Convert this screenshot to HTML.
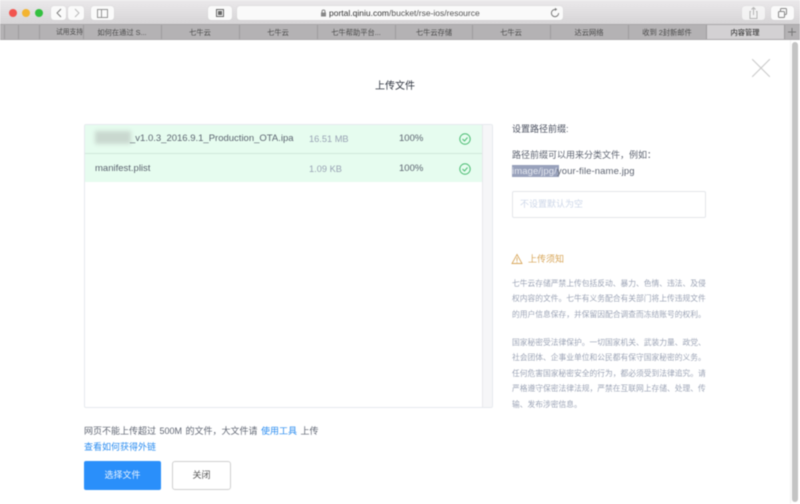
<!DOCTYPE html>
<html><head><meta charset="utf-8">
<style>
*{box-sizing:border-box}
html,body{margin:0;padding:0;width:800px;height:504px;overflow:hidden;background:#fff;font-family:"Liberation Sans","Noto Sans CJK SC",sans-serif}
.a{position:absolute;white-space:nowrap}
#wrap{position:absolute;left:0;top:0;width:800px;height:504px;filter:blur(.45px)}
.bar{left:0;top:0;width:800px;height:24px;background:linear-gradient(#ebe9eb,#d6d4d6)}
.tabs{left:0;top:24px;width:800px;height:16px;background:#b4b2b4;border-top:1px solid #a9a7a9;border-bottom:1px solid #a9a7a9}
.sep{top:25px;width:1px;height:14px;background:#9d9b9d}
.tab{top:26px;height:14px;line-height:14px;font-size:7.25px;color:#4a4a4a;text-align:center;width:78px}
.btn{background:#fafafa;border-radius:3px;box-shadow:0 0 1px #c4c4c4;height:14px;top:6px}
.dot{width:8px;height:8px;border-radius:50%;top:9px}
.row{left:85px;width:397px;height:28px;background:#e6fcef}
.t{font-size:9.500px;line-height:14px;color:#5c6470}
.n{font-size:7.750px;line-height:15.400px;color:#9ba3b5}
.c{font-size:9px;line-height:15px}
</style></head><body>
<div id="wrap">
<div class="a bar"></div>
<div class="a dot" style="left:9px;background:#f2544f"></div>
<div class="a dot" style="left:22px;background:#f3b431"></div>
<div class="a dot" style="left:35px;background:#33c03f"></div>
<div class="a btn" style="left:51px;width:15px"></div>
<div class="a btn" style="left:68px;width:16px"></div>
<svg class="a" style="left:51px;top:6px" width="33" height="14" fill="none" stroke-width=".9"><path d="M10 3L6 7l4 4" stroke="#777"/><path d="M24 3l4 4-4 4" stroke="#b8b8b8"/></svg>
<div class="a btn" style="left:91px;width:23px"></div>
<svg class="a" style="left:91px;top:6px" width="23" height="14" fill="none" stroke="#8a8a8a" stroke-width=".9"><rect x="6.500" y="3.500" width="10" height="8"/><path d="M10.500 3.500v8"/></svg>
<div class="a btn" style="left:208px;width:24px"></div>
<svg class="a" style="left:208px;top:6px" width="24" height="14" fill="none" stroke="#666"><rect x="8.500" y="3.500" width="7" height="7"/><rect x="10.500" y="5.500" width="3" height="3" fill="#666"/></svg>
<div class="a btn" style="left:237px;width:326px"></div>
<svg class="a" style="left:320px;top:9px" width="7" height="8"><rect x="1" y="3.500" width="5" height="4" fill="#888"/><path d="M2 4V2.500a1.500 1.500 0 0 1 3 0V4" fill="none" stroke="#888"/></svg>
<div class="a" style="left:329px;top:6px;line-height:14px;font-size:8.500px;color:#555"><span style="color:#333">portal.qiniu.com</span>/bucket/rse-ios/resource</div>
<svg class="a" style="left:550px;top:7px" width="10" height="11" fill="none" stroke="#777"><path d="M5 2.500a3.600 3.600 0 1 0 3.600 3.600"/><path d="M5 .8v3.200L7.200 2.400z" fill="#777" stroke="none"/></svg>
<div class="a btn" style="left:742px;width:23px;opacity:.75"></div>
<svg class="a" style="left:742px;top:6px" width="23" height="14" fill="none" stroke="#b4b4b4"><path d="M9 5.500H8v7h7v-7h-1M11.500 9V1.500M9.500 3.500l2-2 2 2"/></svg>
<div class="a btn" style="left:771px;width:23px"></div>
<svg class="a" style="left:771px;top:6px" width="23" height="14" fill="none" stroke="#888"><rect x="7.500" y="5.500" width="6" height="6" rx="1"/><path d="M9.500 5V3.500a1 1 0 0 1 1-1h4a1 1 0 0 1 1 1v4a1 1 0 0 1-1 1H14"/></svg>

<div class="a tabs"></div>
<div class="a" style="left:706px;top:25px;width:78px;height:14px;background:#d3d1d3"></div>
<div class="a sep" style="left:4px"></div><div class="a sep" style="left:18px"></div><div class="a sep" style="left:39px"></div><div class="a sep" style="left:83px"></div><div class="a sep" style="left:161px"></div><div class="a sep" style="left:239px"></div><div class="a sep" style="left:317px"></div><div class="a sep" style="left:395px"></div><div class="a sep" style="left:472px"></div><div class="a sep" style="left:550px"></div><div class="a sep" style="left:628px"></div><div class="a sep" style="left:706px"></div><div class="a sep" style="left:784px"></div>
<div class="a tab" style="left:39px;width:44px;text-align:right;overflow:hidden;font-size:6.750px">试用支持</div>
<div class="a tab" style="left:83px">如何在通过 S...</div>
<div class="a tab" style="left:161px">七牛云</div>
<div class="a tab" style="left:239px">七牛云</div>
<div class="a tab" style="left:317px">七牛帮助平台...</div>
<div class="a tab" style="left:395px">七牛云存储</div>
<div class="a tab" style="left:472px">七牛云</div>
<div class="a tab" style="left:550px">达云网络</div>
<div class="a tab" style="left:628px">收到 2封新邮件</div>
<div class="a tab" style="left:706px;color:#222">内容管理</div>
<svg class="a" style="left:787px;top:27px" width="10" height="10" stroke="#777"><path d="M5 1v8M1 5h8"/></svg>

<svg class="a" style="left:752px;top:59px" width="18" height="18" stroke="#c8c8c8" stroke-width="1"><path d="M0 0l18 18M18 0L0 18"/></svg>
<div class="a" style="left:792px;top:42px;width:6px;height:460px;background:#c4c4c4;border-radius:3px"></div>
<div class="a" style="left:790px;top:40px;width:1px;height:464px;background:#f4f4f4"></div>

<div class="a" style="left:375px;top:79px;font-size:10px;line-height:16px;color:#2f3540">上传文件</div>

<div class="a" style="left:84px;top:124px;width:409px;height:284px;border:1px solid #e6e9ee;border-radius:2px"></div>
<div class="a" style="left:482px;top:125px;width:10px;height:282px;background:#f6f6f8;border-left:1px solid #e8e8ec"></div>
<div class="a row" style="top:125px"></div>
<div class="a" style="left:85px;top:153px;width:397px;height:1px;background:#cfe8da"></div>
<div class="a row" style="top:154px"></div>
<div class="a" style="left:95px;top:131px;width:36px;height:13px;background:#c9d8cf;filter:blur(2px)"></div>
<div class="a t" style="left:130px;top:132px">_v1.0.3_2016.9.1_Production_OTA.ipa</div>
<div class="a t" style="left:95px;top:162px">manifest.plist</div>
<div class="a t" style="left:309px;top:132px;font-size:9.250px;color:#99a3b4">16.51 MB</div>
<div class="a t" style="left:309px;top:162px;font-size:9.250px;color:#99a3b4">1.09 KB</div>
<div class="a t" style="left:399px;top:132px">100%</div>
<div class="a t" style="left:399px;top:162px">100%</div>
<svg class="a" style="left:459px;top:133px" width="12" height="12" fill="none" stroke="#4dbd74"><circle cx="6" cy="6" r="5.200"/><path d="M3.500 6l2 2 3-3.500"/></svg>
<svg class="a" style="left:459px;top:163px" width="12" height="12" fill="none" stroke="#4dbd74"><circle cx="6" cy="6" r="5.200"/><path d="M3.500 6l2 2 3-3.500"/></svg>

<div class="a c" style="left:512px;top:122px;color:#4b5160">设置路径前缀:</div>
<div class="a c" style="left:512px;top:148px;color:#5f6572">路径前缀可以用来分类文件，例如：</div>
<div class="a" style="left:512px;top:165px;width:47px;height:12px;background:#98a1bb"></div>
<div class="a" style="left:512px;top:164px;line-height:15px;font-size:9.500px;color:#5f6572;letter-spacing:.1px"><span style="color:#e4e7ef">image/jpg/</span>your-file-name.jpg</div>
<div class="a" style="left:512px;top:191px;width:194px;height:27px;border:1px solid #e4e6ea;border-radius:2px"></div>
<div class="a c" style="left:520px;top:197px;color:#cdd7e8">不设置默认为空</div>
<svg class="a" style="left:511px;top:253px" width="12" height="12" fill="none" stroke="#d9a95f" stroke-width=".9"><path d="M6 1.500L11 10.500H1z"/><path d="M6 4.500v3.500M6 8.800v.8"/></svg>
<div class="a c" style="left:528px;top:252px;color:#d7a557">上传须知</div>

<div class="a n" style="left:512px;top:276px">七牛云存储严禁上传包括反动、暴力、色情、违法、及侵<br>权内容的文件。七牛有义务配合有关部门将上传违规文件<br>的用户信息保存，并保留因配合调查而冻结账号的权利。</div>
<div class="a n" style="left:512px;top:335px">国家秘密受法律保护。一切国家机关、武装力量、政党、<br>社会团体、企事业单位和公民都有保守国家秘密的义务。<br>任何危害国家秘密安全的行为，都必须受到法律追究。请<br>严格遵守保密法律法规，严禁在互联网上存储、处理、传<br>输、发布涉密信息。</div>

<div class="a c" style="left:84px;top:424px;color:#5f6572;word-spacing:1px">网页不能上传超过 500M 的文件，大文件请 <span style="color:#2a8cf0">使用工具</span> 上传</div>
<div class="a c" style="left:84px;top:440px;color:#2a8cf0">查看如何获得外链</div>
<div class="a c" style="left:84px;top:461px;width:77px;height:29px;background:#2a8ffa;border-radius:2px;color:#e8f3ff;text-align:center;line-height:29px">选择文件</div>
<div class="a c" style="left:172px;top:461px;width:59px;height:29px;background:#fff;border:1px solid #cfcfcf;border-radius:3px;color:#555;text-align:center;line-height:27px">关闭</div>
</div>
</body></html>
